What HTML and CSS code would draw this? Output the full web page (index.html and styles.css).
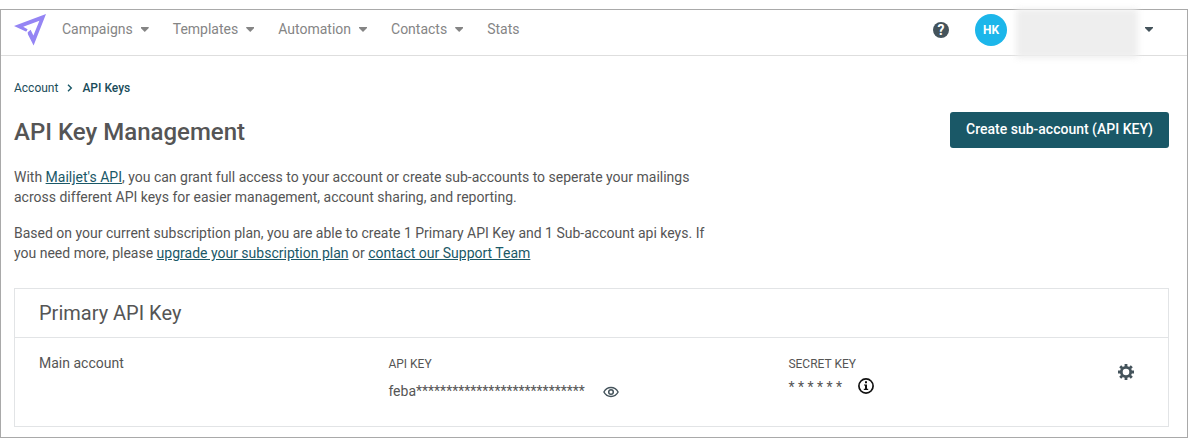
FILE: index.html
```html
<!DOCTYPE html>
<html lang="en">
<head>
<meta charset="utf-8">
<title>API Key Management</title>
<link rel="stylesheet" href="styles.css">
</head>
<body>
<div class="frame">
  <header class="topbar">
    <svg class="logo" width="34" height="34" viewBox="0 0 34 34"><path fill="#9585f4" d="M0 13 32 1 19.6 32.6 14 21.4 13.6 19.2 16.6 16.8 19.4 22.6 25.4 7.8 9.2 13.8 13.6 16.2 12.4 18.8Z"/><path d="M11.6 20.4 15.8 16" stroke="#fff" stroke-width="1.1"/></svg>
    <nav class="nav">
      <a class="nav-item">Campaigns<i class="caret"></i></a>
      <a class="nav-item">Templates<i class="caret"></i></a>
      <a class="nav-item">Automation<i class="caret"></i></a>
      <a class="nav-item">Contacts<i class="caret"></i></a>
      <a class="nav-item">Stats</a>
    </nav>
    <div class="user">
      <span class="help">?</span>
      <span class="avatar">HK</span>
      <span class="account-name"></span>
      <i class="caret caret-dark"></i>
    </div>
  </header>
  <main class="content">
    <div class="breadcrumb"><span>Account</span><svg width="6" height="8" viewBox="0 0 6 8"><path d="M1 .8 4.3 4 1 7.2" fill="none" stroke="#1a5867" stroke-width="1.4"/></svg><span class="current">API Keys</span></div>
    <div class="heading">
      <h1>API Key Management</h1>
      <button class="create">Create sub-account (API KEY)</button>
    </div>
    <p>With <a>Mailjet's API</a>, you can grant full access to your account or create sub-accounts to seperate your mailings<br>across different API keys for easier management, account sharing, and reporting.</p>
    <p>Based on your current subscription plan, you are able to create 1 Primary API Key and 1 Sub-account api keys. If<br>you need more, please <a>upgrade your subscription plan</a> or <a>contact our Support Team</a></p>
    <section class="card">
      <h2>Primary API Key</h2>
      <div class="row">
        <div class="name">Main account</div>
        <div class="field">
          <div class="label">API KEY</div>
          <div class="value key">feba****************************<svg class="eye" width="16" height="12" viewBox="0 0 16 12" fill="none" stroke="#44535b"><path stroke-width="1.4" d="M.9 6C2.6 2.8 5 1.5 8 1.5S13.4 2.8 15.1 6C13.4 9.2 11 10.5 8 10.5S2.6 9.2.9 6Z"/><circle cx="8" cy="6" r="2.3" stroke-width="1.5"/></svg></div>
        </div>
        <div class="field">
          <div class="label">SECRET KEY</div>
          <div class="value secret">* * * * * *<svg class="info" width="16" height="16" viewBox="0 0 16 16"><circle cx="8" cy="8" r="7.1" fill="none" stroke="#111" stroke-width="1.7"/><path fill="#111" d="M7 3.3h2v2H7ZM6 6.4h3v4.3h1.2V12H5.8v-1.3H7V7.6H6Z"/></svg></div>
        </div>
        <svg class="gear" width="16" height="16" viewBox="0 0 16 16"><circle cx="8" cy="8" r="4.7" fill="none" stroke="#44535b" stroke-width="2.8"/><path stroke="#44535b" stroke-width="2.8" d="M8 0v3M8 13v3M0 8h3M13 8h3M2.2 2.2l2 2M11.8 11.8l2 2M13.8 2.2l-2 2M4.2 11.8l-2 2"/></svg>
      </div>
    </section>
  </main>
</div>
</body>
</html>
```

FILE: styles.css
```css
* { box-sizing: border-box; }
body { margin: 0; padding-top: 9px; background: #fff; color: #555; font: 14px/20px Roboto, sans-serif; }
.frame { height: 429px; border: 1px solid #a9a9a9; }
.topbar { display: flex; height: 46px; border-bottom: 1px solid #dedede; padding: 3px 34px 0 13px; }
.logo { flex: none; }
.nav { display: flex; gap: 24px; margin: 6px 0 0 14px; color: #858585; }
.nav-item { display: flex; align-items: flex-start; }
.caret { width: 8px; height: 5px; background: #858585; clip-path: polygon(0 0, 100% 0, 100% 20%, 50% 100%, 0 20%); margin: 8px 0 0 8px; }
.user { display: flex; align-items: flex-start; margin-left: auto; }
.help { width: 16px; height: 16px; margin: 9px 26px 0 0; border-radius: 50%; background: #44535b; color: #fff; font-size: 14px; font-weight: 700; line-height: 16px; text-align: center; }
.avatar { width: 32px; height: 32px; margin-top: 1px; border-radius: 50%; background: #1cb6ea; color: #fff; font-size: 12px; font-weight: 700; line-height: 32px; text-align: center; }
.account-name { width: 122px; height: 49px; margin: -4px -1px 0 9px; background: #eee; filter: blur(3px); }
.caret-dark { background: #44535b; margin: 14px 0 0 8px; }
.content { padding: 22px 18px 0 13px; }
.breadcrumb { display: flex; align-items: center; gap: 9px; color: #1a4c5a; font-size: 12px; }
.breadcrumb .current { font-weight: 500; }
.heading { display: flex; justify-content: space-between; height: 69px; }
h1 { margin: 19px 0 0; font-size: 24px; line-height: 30px; font-weight: 500; }
.create { width: 219px; height: 36px; margin-top: 14px; border: 0; border-radius: 3px; background: #1a5867; color: #fff; font: 500 14px Roboto, sans-serif; padding: 0 0 2px; }
p { margin: 0 0 16px; }
p a { color: #1a5867; text-decoration: underline; }
.card { height: 139px; margin-top: 25px; border: 1px solid #e2e4e6; }
h2 { height: 49px; margin: 0; padding-left: 24px; border-bottom: 1px solid #e2e4e6; font-size: 20px; line-height: 48px; font-weight: 400; }
.row { display: grid; grid-template-columns: 349.4px 400px 329.6px 16px; padding: 15px 0 0 24px; }
.label { font-size: 12px; line-height: 22px; }
.value { display: flex; align-items: flex-start; }
.key { padding-top: 6px; }
.secret { padding-top: 2px; }
.eye { margin: 5px 0 0 18px; }
.info { margin: 1px 0 0 16px; }
.gear { margin-top: 11px; }
```
